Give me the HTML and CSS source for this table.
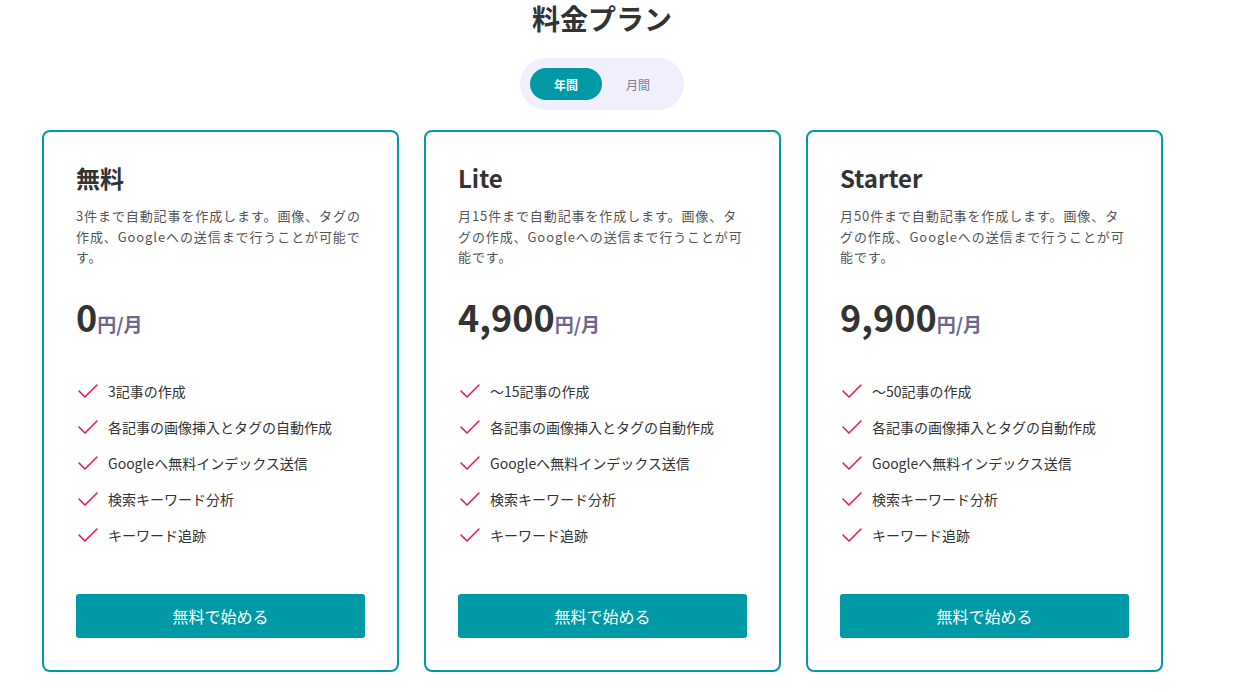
FILE: index.html
```html
<!DOCTYPE html>
<html lang="ja">
<head>
<meta charset="utf-8">
<link rel="stylesheet" href="styles.css">
</head>
<body>
<section class="pricing">
  <h1 class="heading">料金プラン</h1>
  <div class="toggle-wrap">
    <div class="toggle">
      <span class="opt active">年間</span>
      <span class="opt">月間</span>
    </div>
  </div>
  <div class="cards">
    <div class="card">
      <h2 class="plan">無料</h2>
      <p class="desc">3件まで自動記事を作成します。画像、タグの作成、Googleへの送信まで行うことが可能です。</p>
      <div class="price"><span class="amount">0</span><span class="unit">円/月</span></div>
      <ul class="features">
        <li><svg class="check" viewBox="0 0 20 14"><path d="M1 7 L7 13 L19 1"/></svg>3記事の作成</li>
        <li><svg class="check" viewBox="0 0 20 14"><path d="M1 7 L7 13 L19 1"/></svg>各記事の画像挿入とタグの自動作成</li>
        <li><svg class="check" viewBox="0 0 20 14"><path d="M1 7 L7 13 L19 1"/></svg>Googleへ無料インデックス送信</li>
        <li><svg class="check" viewBox="0 0 20 14"><path d="M1 7 L7 13 L19 1"/></svg>検索キーワード分析</li>
        <li><svg class="check" viewBox="0 0 20 14"><path d="M1 7 L7 13 L19 1"/></svg>キーワード追跡</li>
      </ul>
      <button class="cta">無料で始める</button>
    </div>
    <div class="card">
      <h2 class="plan">Lite</h2>
      <p class="desc">月15件まで自動記事を作成します。画像、タグの作成、Googleへの送信まで行うことが可能です。</p>
      <div class="price"><span class="amount">4,900</span><span class="unit">円/月</span></div>
      <ul class="features">
        <li><svg class="check" viewBox="0 0 20 14"><path d="M1 7 L7 13 L19 1"/></svg>〜15記事の作成</li>
        <li><svg class="check" viewBox="0 0 20 14"><path d="M1 7 L7 13 L19 1"/></svg>各記事の画像挿入とタグの自動作成</li>
        <li><svg class="check" viewBox="0 0 20 14"><path d="M1 7 L7 13 L19 1"/></svg>Googleへ無料インデックス送信</li>
        <li><svg class="check" viewBox="0 0 20 14"><path d="M1 7 L7 13 L19 1"/></svg>検索キーワード分析</li>
        <li><svg class="check" viewBox="0 0 20 14"><path d="M1 7 L7 13 L19 1"/></svg>キーワード追跡</li>
      </ul>
      <button class="cta">無料で始める</button>
    </div>
    <div class="card">
      <h2 class="plan">Starter</h2>
      <p class="desc">月50件まで自動記事を作成します。画像、タグの作成、Googleへの送信まで行うことが可能です。</p>
      <div class="price"><span class="amount">9,900</span><span class="unit">円/月</span></div>
      <ul class="features">
        <li><svg class="check" viewBox="0 0 20 14"><path d="M1 7 L7 13 L19 1"/></svg>〜50記事の作成</li>
        <li><svg class="check" viewBox="0 0 20 14"><path d="M1 7 L7 13 L19 1"/></svg>各記事の画像挿入とタグの自動作成</li>
        <li><svg class="check" viewBox="0 0 20 14"><path d="M1 7 L7 13 L19 1"/></svg>Googleへ無料インデックス送信</li>
        <li><svg class="check" viewBox="0 0 20 14"><path d="M1 7 L7 13 L19 1"/></svg>検索キーワード分析</li>
        <li><svg class="check" viewBox="0 0 20 14"><path d="M1 7 L7 13 L19 1"/></svg>キーワード追跡</li>
      </ul>
      <button class="cta">無料で始める</button>
    </div>
  </div>
</section>
</body>
</html>
```
FILE: styles.css
```css
* { box-sizing: border-box; }
html, body { margin: 0; padding: 0; background: #fff; }
body {
  font-family: "Noto Sans CJK JP", "Noto Sans", sans-serif;
  color: #333;
  width: 1241px;
  height: 692px;
  overflow: hidden;
}
.pricing {
  padding: 0 0 0 42px;
  width: 1170px;
}
.heading {
  margin: 0;
  height: 40px;
  line-height: 37px;
  font-size: 28px;
  font-weight: 700;
  text-align: center;
  color: #333;
  width: 1120px;
}
.toggle-wrap {
  display: flex;
  justify-content: center;
  margin-top: 18px;
  width: 1120px;
}
.toggle {
  display: flex;
  align-items: center;
  background: #f0f0fd;
  border-radius: 26px;
  padding: 10px;
  width: 164px;
  height: 52px;
}
.opt {
  width: 72px;
  height: 32px;
  border-radius: 16px;
  display: flex;
  align-items: center;
  justify-content: center;
  font-size: 12px;
  color: #7d7a94;
}
.opt.active {
  background: #009aa6;
  color: #fff;
  font-weight: 700;
}
.cards {
  margin-top: 20px;
  display: grid;
  grid-template-columns: repeat(3, 357px);
  column-gap: 25px;
}
.card {
  border: 2px solid #009aa6;
  border-radius: 8px;
  height: 542px;
  padding: 28px 32px 32px;
  display: flex;
  flex-direction: column;
}
.plan {
  margin: 0;
  font-size: 24px;
  font-weight: 700;
  line-height: 36px;
  color: #333;
}
.desc {
  margin: 10px 0 0;
  font-size: 13px;
  letter-spacing: 0.9px;
  line-height: 20.5px;
  color: #555;
  height: 62px;
}
.price {
  margin-top: 26px;
  display: flex;
  align-items: baseline;
  height: 44px;
}
.amount {
  font-size: 36px;
  font-weight: 700;
  color: #333;
  line-height: 44px;
}
.unit {
  font-size: 19px;
  font-weight: 700;
  color: #6e6690;
}
.features {
  list-style: none;
  margin: 42px 0 0;
  padding: 0;
  display: flex;
  flex-direction: column;
  gap: 14px;
}
.features li {
  display: flex;
  align-items: center;
  height: 22px;
  font-size: 14px;
  color: #333;
}
.check {
  width: 20px;
  height: 14px;
  margin: 0 10px 0 2px;
  fill: none;
  stroke: #e8174b;
  stroke-width: 1.5;
  stroke-linecap: round;
  stroke-linejoin: round;
}
.cta {
  margin-top: auto;
  height: 44px;
  width: 100%;
  border: none;
  border-radius: 3px;
  background: #009aa6;
  color: #fff;
  font-family: inherit;
  font-size: 16px;
}
```
